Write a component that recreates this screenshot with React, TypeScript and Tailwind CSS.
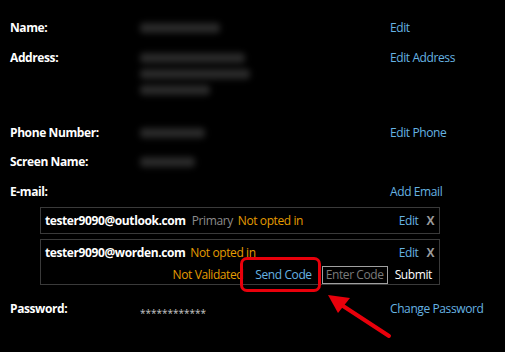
import { ReactNode } from 'react';

const font = { fontFamily: '"Open Sans", "Noto Sans", sans-serif' };

function Blur({ w, lines = 1 }: { w: number[]; lines?: number }) {
  return (
    <div className="flex flex-col gap-[6px] blur-[3px]">
      {Array.from({ length: lines }).map((_, i) => (
        <div key={i} className="h-[10px] bg-[#2a2a2a] rounded" style={{ width: w[i] ?? w[0] }} />
      ))}
    </div>
  );
}

function Row({ label, value, link, className = '' }: { label: string; value?: ReactNode; link?: string; className?: string }) {
  return (
    <div className={`flex items-start ${className}`}>
      <div className="w-[130px] font-bold text-white leading-4">{label}</div>
      <div className="w-[250px] pt-[3px]">{value}</div>
      {link && <div className="text-[#66b3e3] leading-4">{link}</div>}
    </div>
  );
}

export default function App() {
  return (
    <div className="relative w-[505px] h-[352px] bg-black text-[12px] tracking-[-0.4px] overflow-hidden" style={font}>
      <div className="pl-[10px] pt-[20px]">
        <Row label="Name:" value={<Blur w={[80]} />} link="Edit" />
        <Row label="Address:" className="mt-[14px] h-[75px]" value={<Blur w={[105, 110, 70]} lines={3} />} link="Edit Address" />
        <Row label="Phone Number:" value={<Blur w={[65]} />} link="Edit Phone" />
        <Row label="Screen Name:" className="mt-[13px]" value={<Blur w={[55]} />} />
        <Row label="E-mail:" className="mt-[14px]" link="Add Email" />

        <div className="ml-[30px] mt-[7px] w-[400px] flex flex-col gap-[5px]">
          <div className="h-[27px] border border-[#3a3a3a] flex items-center pl-[4px] pr-[5px]">
            <span className="font-bold text-white">tester9090@outlook.com</span>
            <span className="ml-[6px] text-[#8c8c8c]">Primary</span>
            <span className="ml-[5px] text-[#e59c00]">Not opted in</span>
            <span className="ml-auto text-[#66b3e3]">Edit</span>
            <span className="ml-[8px] font-bold text-[#9a9a9a]">X</span>
          </div>
          <div className="h-[46px] border border-[#3a3a3a] flex flex-col pl-[4px] pr-[5px]">
            <div className="flex items-center h-[26px]">
              <span className="font-bold text-white">tester9090@worden.com</span>
              <span className="ml-[5px] text-[#e59c00]">Not opted in</span>
              <span className="ml-auto text-[#66b3e3]">Edit</span>
              <span className="ml-[8px] font-bold text-[#9a9a9a]">X</span>
            </div>
            <div className="flex items-center justify-end h-[18px] pr-[2px]">
              <span className="text-[#e59c00]">Not Validated</span>
              <span className="ml-[12px] text-[#66b3e3]">Send Code</span>
              <div className="ml-[10px] w-[66px] h-[18px] border border-[#a0a0a0] text-[#7a7a7a] leading-4 pl-[3px] whitespace-nowrap overflow-hidden">Enter Code</div>
              <span className="ml-[7px] text-white">Submit</span>
            </div>
          </div>
        </div>

        <Row label="Password:" className="mt-[16px]" value={<span className="text-[#c8c8c8] text-[10px] leading-none tracking-normal">************</span>} link="Change Password" />
      </div>

      {/* annotation */}
      <div className="absolute left-[240px] top-[257px] w-[81px] h-[35px] border-[3px] border-[#e8000b] rounded-[7px]" />
      <svg className="absolute left-0 top-0" width="505" height="352">
        <line x1="389" y1="336" x2="340" y2="304" stroke="#e8000b" strokeWidth="4" strokeLinecap="round" />
        <polygon points="328,295 350,298 338,313" fill="#e8000b" />
      </svg>
    </div>
  );
}
